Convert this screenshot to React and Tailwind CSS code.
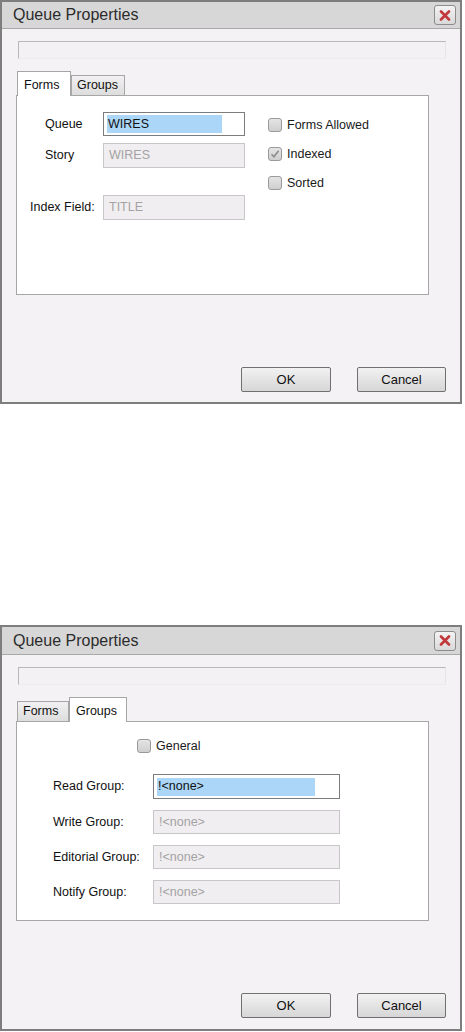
import React from 'react';

function CloseButton() {
  return (
    <div className="w-[22px] h-[20px] border border-[#8c8c8c] rounded-[3px] bg-gradient-to-b from-[#f3f3f3] to-[#d9d9d9] flex items-center justify-center">
      <svg width="12" height="11" viewBox="0 0 12 11">
        <path d="M2 1.5 L10 9.5 M10 1.5 L2 9.5" stroke="#c2383a" strokeWidth="2.6" strokeLinecap="round" />
      </svg>
    </div>
  );
}

function Checkbox({ checked, label, className = '' }) {
  return (
    <div className={`flex items-center h-[14px] ${className}`}>
      <div className="w-[14px] h-[14px] rounded-[3px] border border-[#9a9a9a] bg-gradient-to-b from-[#e4e4e4] to-[#cfcfcf] flex items-center justify-center">
        {checked && (
          <svg width="10" height="10" viewBox="0 0 10 10">
            <path d="M1.5 5.2 L4 7.8 L8.6 1.8" stroke="#8d8d8d" strokeWidth="1.6" fill="none" />
          </svg>
        )}
      </div>
      <span className="ml-[5px] text-[12.5px] text-[#1a1a1a]">{label}</span>
    </div>
  );
}

function TextBox({ value, disabled, width, highlightWidth }) {
  if (disabled) {
    return (
      <div className={`${width} h-full border border-[#c9c6c9] bg-[#f1eef1] flex items-center pl-[5px] text-[12.5px] text-[#a3a3a3]`}>
        {value}
      </div>
    );
  }
  return (
    <div className={`${width} h-full border border-[#7c7c7c] bg-white flex items-center pl-[3px]`}>
      <span className={`${highlightWidth} h-[18px] bg-[#abd6f8] flex items-center pl-[1px] text-[12.5px] text-[#111]`}>
        {value}
      </span>
    </div>
  );
}

function Tab({ label, active, width }) {
  if (active) {
    return (
      <div className={`${width} h-[25px] -mb-px relative z-10 bg-white border border-b-0 border-[#a6a6a6] flex items-start pt-[4px] pl-[6px] text-[12.5px] text-[#111]`}>
        {label}
      </div>
    );
  }
  return (
    <div className={`${width} h-[20px] bg-gradient-to-b from-[#f1f1f1] to-[#dddddd] border border-b-0 border-[#a6a6a6] flex items-center pl-[5px] text-[12.5px] text-[#111]`}>
      {label}
    </div>
  );
}

function Dialog({ tabs, children, height, titleHeight }) {
  return (
    <div className={`w-[462px] ${height} border-2 border-[#7e7e7e] bg-[#f5f2f5] flex flex-col font-['Liberation_Sans',Arial,sans-serif]`}>
      <div className={`${titleHeight} bg-[#d7d7d7] border-b border-[#a9a9a9] flex items-center justify-between pl-[11px] pr-[4px]`}>
        <span className="text-[16px] text-[#2c2c2c]">Queue Properties</span>
        <CloseButton />
      </div>

      <div className="mt-[12px] ml-[16px] w-[428px] h-[18px] border border-[#b8b8b8] border-r-[#e6e6e6] border-b-[#ececec] bg-[#f3f1f3]" />

      <div className="mt-[12px] ml-[15px] flex items-end">
        {tabs}
      </div>
      <div className="ml-[14px] w-[413px] h-[200px] border border-[#a6a6a6] bg-white">
        {children}
      </div>

      <div className="mt-[72px] flex justify-end gap-[26px] pr-[14px]">
        <button className="w-[90px] h-[25px] border border-[#707070] rounded-[2px] bg-gradient-to-b from-[#f2f2f2] to-[#d6d6d6] text-[13px] text-[#111]">
          OK
        </button>
        <button className="w-[89px] h-[25px] border border-[#707070] rounded-[2px] bg-gradient-to-b from-[#f2f2f2] to-[#d6d6d6] text-[13px] text-[#111]">
          Cancel
        </button>
      </div>
    </div>
  );
}

function FormsPanel() {
  return (
    <div className="flex">
      <div className="flex flex-col pt-[16px]">
        <div className="flex h-[24px] items-center">
          <span className="w-[86px] pl-[28px] text-[12.5px] text-[#111]">Queue</span>
          <TextBox value="WIRES" width="w-[142px]" highlightWidth="w-[115px]" />
        </div>
        <div className="flex h-[25px] items-center mt-[7px]">
          <span className="w-[86px] pl-[28px] text-[12.5px] text-[#111]">Story</span>
          <TextBox value="WIRES" disabled width="w-[142px]" />
        </div>
        <div className="flex h-[25px] items-center mt-[27px]">
          <span className="w-[86px] pl-[13px] text-[12.5px] text-[#111]">Index Field:</span>
          <TextBox value="TITLE" disabled width="w-[142px]" />
        </div>
      </div>
      <div className="ml-[23px] pt-[22px] flex flex-col gap-[15px]">
        <Checkbox label="Forms Allowed" />
        <Checkbox label="Indexed" checked />
        <Checkbox label="Sorted" />
      </div>
    </div>
  );
}

function GroupsPanel() {
  const rows = ['Write Group:', 'Editorial Group:', 'Notify Group:'];
  return (
    <div className="flex flex-col pt-[17px]">
      <Checkbox label="General" className="ml-[120px]" />
      <div className="mt-[21px] flex flex-col gap-[11px]">
        <div className="flex h-[25px] items-center">
          <span className="w-[136px] pl-[36px] text-[12.5px] text-[#111]">Read Group:</span>
          <TextBox value="!<none>" width="w-[187px]" highlightWidth="w-[158px]" />
        </div>
        {rows.map((r) => (
          <div key={r} className="flex h-[24px] items-center">
            <span className="w-[136px] pl-[36px] text-[12.5px] text-[#111]">{r}</span>
            <TextBox value="!<none>" disabled width="w-[187px]" />
          </div>
        ))}
      </div>
    </div>
  );
}

export default function App() {
  return (
    <div className="w-[465px] h-[1032px] bg-white flex flex-col">
      <Dialog
        height="h-[404px]"
        titleHeight="h-[27px]"
        tabs={
          <>
            <Tab label="Forms" active width="w-[54px]" />
            <Tab label="Groups" width="w-[54px]" />
          </>
        }
      >
        <FormsPanel />
      </Dialog>

      <div className="mt-[221px]">
        <Dialog
          height="h-[406px]"
          titleHeight="h-[28px]"
          tabs={
            <>
              <Tab label="Forms" width="w-[52px]" />
              <Tab label="Groups" active width="w-[58px]" />
            </>
          }
        >
          <GroupsPanel />
        </Dialog>
      </div>
    </div>
  );
}
